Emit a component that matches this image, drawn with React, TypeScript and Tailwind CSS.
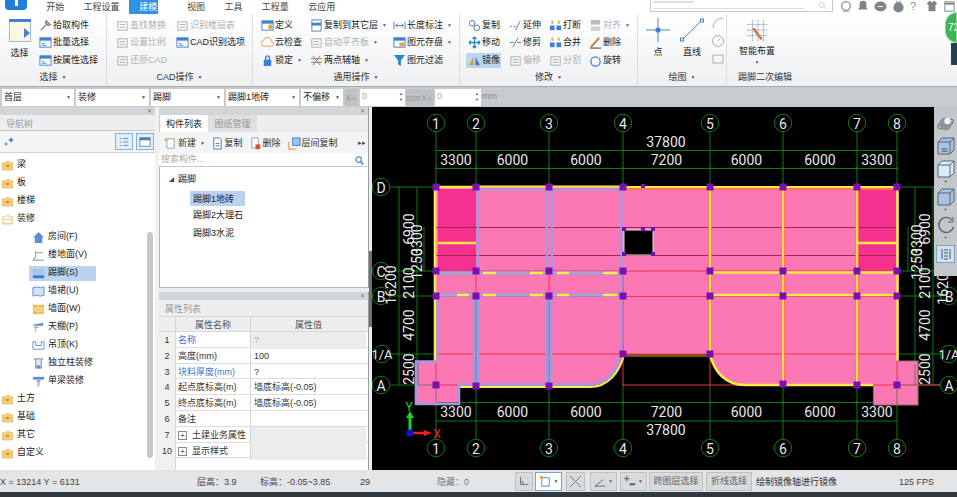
import React from "react";

const B = "#3b82d6";
const O = "#e8a33a";
const G = "#a9adb2";

function Ic({ children, s = 14 }: { children?: React.ReactNode; s?: number }) {
  return (
    <svg width={s} height={s} viewBox="0 0 14 14" className="shrink-0" fill="none">
      {children}
    </svg>
  );
}

const win = (
  <>
    <rect x="1" y="2" width="12" height="10" fill="#fff" stroke={B} />
    <rect x="1" y="2" width="12" height="3" fill={B} />
    <path d="M3 8h3M3 10h5" stroke={B} />
  </>
);
const ghost = (
  <>
    <rect x="2" y="3" width="10" height="9" stroke={G} />
    <path d="M4 6h6M4 9h6" stroke={G} />
  </>
);
const blocks = (
  <>
    <rect x="1" y="7" width="5" height="5" fill={B} />
    <rect x="8" y="7" width="5" height="5" fill={B} />
    <path d="M3.5 2v3M10.5 2v3" stroke={O} strokeWidth="2" />
  </>
);

function Item({ icon, t, dim, arrow, hl }: { icon: React.ReactNode; t: string; dim?: boolean; arrow?: boolean; hl?: boolean }) {
  return (
    <div className={`flex items-center h-[17.5px] ${dim ? "text-[#b0b2b5]" : "text-[#222]"}`}>
      <div className={`flex items-center justify-center h-[15px] w-[16px] shrink-0 ${hl ? "bg-[#bcd6f2]" : ""}`}>
        <Ic s={13}>{icon}</Ic>
      </div>
      <span className={`whitespace-nowrap leading-[15px] h-[15px] ${hl ? "bg-[#bcd6f2] pr-[1px]" : ""}`}>{t}</span>
      {arrow && <span className="text-[5px] ml-[4px] text-[#666]">▼</span>}
    </div>
  );
}

function Group({ w, label, children, last }: { w: string; label: string; children: React.ReactNode; last?: boolean }) {
  return (
    <div className={`${w} h-full flex flex-col shrink-0 ${last ? "" : "border-r border-[#dcdee0]"}`}>
      <div className="h-[54px] flex pt-[1px]">{children}</div>
      <div className="flex-1 flex items-center justify-center text-[#333] gap-[4px] pt-[1px]">
        {label.split("|").map((s, i) => (i === 0 ? <span key={i}>{s}</span> : <span key={i} className="text-[5px] text-[#555]">▼</span>))}
      </div>
    </div>
  );
}

function Col({ children, w }: { children: React.ReactNode; w: string }) {
  return <div className={`${w} shrink-0 pt-[1.5px]`}>{children}</div>;
}

function Ribbon() {
  return (
    <div className="h-[73px] flex bg-gradient-to-b from-white to-[#eff0f2] border-b border-[#a8abae]">
      <Group w="w-[107px]" label="选择|">
        <div className="w-[37px] flex flex-col items-center pt-[4px] pl-[2px] shrink-0">
          <svg width="22" height="23" viewBox="0 0 22 23">
            <rect x="0.5" y="0.5" width="21" height="22" fill="#fdf6e3" stroke="#9dbbe0" />
            <rect x="0" y="0" width="22" height="3" fill={B} />
            <path d="M15 9l6 5-6 5z" fill={B} />
          </svg>
          <span className="mt-[5px] text-[#222]">选择</span>
        </div>
        <Col w="w-[70px]">
          <Item icon={<path d="M2 12L9 5M8 2l4 4-2 1-3-3z" stroke="#777" strokeWidth="1.4" />} t="拾取构件" />
          <Item icon={win} t="批量选择" />
          <Item icon={win} t="按属性选择" />
        </Col>
      </Group>
      <Group w="w-[146px]" label="CAD操作|">
        <Col w="w-[60px] ml-[7px]">
          <Item dim icon={ghost} t="查找替换" />
          <Item dim icon={ghost} t="设置比例" />
          <Item dim icon={ghost} t="还原CAD" />
        </Col>
        <Col w="w-[72px]">
          <Item dim icon={ghost} t="识别楼层表" />
          <Item icon={win} t="CAD识别选项" />
        </Col>
      </Group>
      <Group w="w-[207px]" label="通用操作|">
        <Col w="w-[49px] ml-[6px]">
          <Item icon={<><rect x="1" y="2" width="12" height="10" fill="#fff" stroke={B} /><rect x="1" y="2" width="12" height="3" fill={B} /><rect x="8" y="6" width="4" height="5" fill={O} /></>} t="定义" />
          <Item icon={<path d="M3 11a3 3 0 0 1 0-6 4 4 0 0 1 8 1 2.5 2.5 0 0 1 0 5z" stroke={O} />} t="云检查" />
          <Item icon={<><rect x="3" y="6" width="8" height="7" rx="1" fill={B} /><path d="M5 6V4a2 2 0 0 1 4 0v2" stroke={B} strokeWidth="1.5" /></>} t="锁定" arrow />
        </Col>
        <Col w="w-[83px]">
          <Item icon={<><rect x="2" y="1" width="10" height="12" fill="#fff" stroke="#5b7fb0" /><rect x="2" y="4" width="10" height="3" fill={B} /></>} t="复制到其它层" arrow />
          <Item dim icon={ghost} t="自动平齐板" arrow />
          <Item icon={<path d="M3 2l8 10M11 2L3 12M1 5h12M1 9h12" stroke="#8a7a66" />} t="两点辅轴" arrow />
        </Col>
        <Col w="w-[66px]">
          <Item icon={<path d="M1 3v8M13 3v8M3 7h8M3 7l2-2M3 7l2 2M11 7L9 5M11 7L9 9" stroke="#4b78b5" />} t="长度标注" arrow />
          <Item icon={<><rect x="1" y="2" width="12" height="10" fill="#fff" stroke="#4b78b5" /><rect x="1" y="2" width="12" height="3" fill={B} /><rect x="7" y="7" width="5" height="4" fill={O} /></>} t="图元存盘" arrow />
          <Item icon={<path d="M1 1h12L8.5 7v6l-3-2V7z" fill="#2a86c8" />} t="图元过滤" />
        </Col>
      </Group>
      <Group w="w-[178px]" label="修改|">
        <Col w="w-[41px] ml-[6px]">
          <Item icon={<><rect x="1.5" y="1.5" width="6" height="6" rx="3" stroke="#4b78b5" /><rect x="6.5" y="6.5" width="6" height="6" rx="3" stroke="#4b78b5" /></>} t="复制" />
          <Item icon={<path d="M7 1v12M1 7h12M7 1L5 3M7 1l2 2M7 13l-2-2M7 13l2-2M1 7l2-2M1 7l2 2M13 7l-2-2M13 7l-2 2" stroke="#2a86c8" strokeWidth="1.4" />} t="移动" />
          <Item hl icon={<><path d="M6 3v9H1z" fill="#d9a12e" /><path d="M8 3v9h5z" fill="#4b78b5" /></>} t="镜像" />
        </Col>
        <Col w="w-[40px]">
          <Item icon={<path d="M1 8h2M5 8h2M7 12l5-10" stroke="#4b78b5" />} t="延伸" />
          <Item icon={<path d="M1 7h4M9 7h4M4 12l6-10" stroke="#4b78b5" />} t="修剪" />
          <Item dim icon={ghost} t="偏移" />
        </Col>
        <Col w="w-[40px]">
          <Item icon={blocks} t="打断" />
          <Item icon={blocks} t="合并" />
          <Item dim icon={ghost} t="分割" />
        </Col>
        <Col w="w-[48px]">
          <Item dim icon={<><rect x="2" y="1" width="10" height="5" fill="#b9bbbe" /><rect x="2" y="8" width="10" height="5" fill="#cfd1d3" /></>} t="对齐" arrow />
          <Item icon={<><path d="M2 12L11 2" stroke="#c77b2b" strokeWidth="2" /><path d="M1 13h12" stroke="#333" /></>} t="删除" />
          <Item icon={<circle cx="7" cy="8" r="5" stroke={B} strokeWidth="1.3" />} t="旋转" />
        </Col>
      </Group>
      <Group w="w-[89px]" label="绘图|">
        <div className="w-[39px] flex flex-col items-center pt-[3px] pl-[1px] shrink-0">
          <svg width="24" height="24" viewBox="0 0 24 24">
            <path d="M12 0v24M0 12h24" stroke="#5e86b9" />
            <circle cx="12" cy="12" r="2.6" fill={B} />
          </svg>
          <span className="mt-[4px] text-[#222]">点</span>
        </div>
        <div className="w-[30px] flex flex-col items-center pt-[3px] shrink-0">
          <svg width="24" height="24" viewBox="0 0 24 24">
            <path d="M2 22L22 2" stroke="#5e86b9" />
            <rect x="0.5" y="20" width="3" height="3" fill="#fff" stroke={B} />
            <rect x="20.5" y="1" width="3" height="3" fill="#fff" stroke={B} />
          </svg>
          <span className="mt-[4px] text-[#222]">直线</span>
        </div>
        <div className="flex flex-col items-center gap-[4px] pt-[1px] ml-[4px]">
          <Ic><path d="M2 12C3 5 6 3 12 2" stroke={G} /></Ic>
          <Ic><circle cx="7" cy="7" r="5.5" stroke={G} /><path d="M7 7l2-2" stroke={G} /></Ic>
          <Ic><rect x="2" y="3" width="10" height="8" stroke={G} /></Ic>
        </div>
      </Group>
      <Group w="w-[76px]" label="踢脚二次编辑" last>
        <div className="w-[60px] flex flex-col items-center pt-[5px]">
          <svg width="24" height="22" viewBox="0 0 24 24">
            <path d="M1 5h22M1 11h22M1 17h22M7 0v24M13 0v24M19 0v24" stroke="#7ea6d8" strokeDasharray="2 1" />
            <path d="M8 9l9 12" stroke="#d9763a" strokeWidth="3" />
          </svg>
          <span className="mt-[2px] text-[#222] leading-[14px]">智能布置</span>
          <span className="text-[5px] leading-[8px] text-[#666]">▼</span>
        </div>
      </Group>
    </div>
  );
}

function Select({ t, w }: { t: string; w: string }) {
  return (
    <div className={`${w} h-[17px] bg-white flex items-center justify-between px-[2px] pt-[1px] text-[#222] shrink-0`}>
      <span className="whitespace-nowrap">{t}</span>
      <span className="text-[5px] text-[#555] pr-[1px]">▼</span>
    </div>
  );
}

function Spin({ w }: { w: string }) {
  return (
    <div className={`${w} h-[17px] bg-white flex items-center justify-between pl-[2px] pr-[2px] text-[#aaa] shrink-0`}>
      <span>0</span>
      <span className="flex flex-col text-[4px] leading-[6px] text-[#555]"><span>▲</span><span>▼</span></span>
    </div>
  );
}

function Toolbar() {
  return (
    <div className="h-[20px] bg-[#c9ccce] flex items-center gap-[2px] pl-[2px]">
      <Select t="首层" w="w-[72px]" />
      <Select t="装修" w="w-[73px]" />
      <Select t="踢脚" w="w-[73px]" />
      <Select t="踢脚1地砖" w="w-[73px]" />
      <Select t="不偏移" w="w-[42px]" />
      <span className="w-[13px] text-[#999] bg-[#bfc2c4] h-[17px] leading-[18px] shrink-0">X=</span>
      <Spin w="w-[45px]" />
      <span className="w-[28px] text-[#999] bg-[#bfc2c4] h-[17px] leading-[18px] shrink-0 -mx-[1px]">mmY=</span>
      <Spin w="w-[46px]" />
      <span className="text-[#888] -ml-[1px]">mm</span>
    </div>
  );
}

function Folder({ open }: { open?: boolean }) {
  return (
    <svg width="11" height="11" viewBox="0 0 12 12" className="shrink-0">
      <path d="M0 3h4l1-1.5h3V3h4v8H0z" fill={open ? "#f8f3e4" : "#f2cd7b"} stroke="#e0b25a" strokeWidth="0.6" />
      {open ? <path d="M1 6h10v4H1z" fill="#fff" stroke="#d8b56a" strokeWidth="0.6" /> : <path d="M4 6.5h4" stroke="#e08a2e" strokeWidth="2" />}
    </svg>
  );
}

const childIcons: Record<string, React.ReactNode> = {
  room: <path d="M7 1L1 7h2v6h8V7h2z" fill="#5b8fd2" />,
  floor: <><path d="M4 2v7L1 12h12" stroke="#5b8fd2" /><path d="M4 4h8" stroke="#9a9a9a" /></>,
  skirt: <><rect x="1" y="2" width="12" height="7" fill="#a9c4e6" /><rect x="1" y="9" width="12" height="3" fill="#2f7bd0" /></>,
  dado: <path d="M1 3l4-1 4 1 4-1v9l-4 1-4-1-4 1z" fill="#cfe2f7" stroke="#5b8fd2" />,
  wall: <><rect x="1" y="2" width="12" height="10" fill="#f5b93e" /><path d="M1 5.5h12M1 8.5h12M7 2v4M4 5.5v3M10 5.5v3M7 8.5v4" stroke="#fff" strokeWidth="0.7" /></>,
  ceil: <><path d="M1 4l11-2v3H1z" fill="#5b8fd2" /><path d="M4 5v7M2 7h5" stroke="#88a9d4" /></>,
  susp: <path d="M1 3v8h12V3h-3v4H4V3z" fill="#fff" stroke="#5b8fd2" />,
  col: <><path d="M2.5 2h9L10 4v8H4V4z" fill="#dfe8f3" stroke="#666" strokeWidth="0.8" /><path d="M5 9h4v3H5z" fill="#5b8fd2" /></>,
  beam: <><path d="M1 2h12v3H1z" fill="#5b8fd2" /><path d="M5 5h4v3H5zM6 8h2v4H6z" fill="#9fb3c9" /></>,
};

function NavRow({ t, open }: { t: string; open?: boolean }) {
  return (
    <div className="h-[18px] flex items-center gap-[4px] pl-[2px] text-[#222]">
      <Folder open={open} />
      <span>{t}</span>
    </div>
  );
}

function NavChild({ t, ic, sel }: { t: string; ic: string; sel?: boolean }) {
  return (
    <div className="h-[18px] flex items-center pl-[29px]">
      <div className={`flex items-center gap-[3px] h-[15px] pl-[3px] w-[67px] whitespace-nowrap text-[#222] ${sel ? "bg-[#bcd3ef]" : ""}`}>
        <Ic s={13}>{childIcons[ic]}</Ic>
        <span>{t}</span>
      </div>
    </div>
  );
}

function CloseStrip() {
  return (
    <div className="h-[8px] bg-[#d3d6d8] flex items-center justify-end pr-[3px] text-[6px] leading-none text-[#777]">✕</div>
  );
}

function NavPanel() {
  return (
    <div className="w-[155px] shrink-0 bg-white flex flex-col relative">
      <CloseStrip />
      <div className="h-[16px] bg-[#eeeeee] text-[#999] pl-[6px] leading-[18px] border-b border-[#c6c8ca]">导航树</div>
      <div className="h-[22px] bg-[#f4f5f6] border-b border-[#d0d2d4] flex items-center pl-[4px] pr-[1px]">
        <svg width="11" height="11" viewBox="0 0 11 11"><path d="M7 1l1 2 2 1-2 1-1 2-1-2-2-1 2-1zM2 6l.8 1.5L4 8l-1.2.6L2 10l-.8-1.4L0 8l1.2-.5z" fill={B} /></svg>
        <div className="ml-auto flex gap-[3px]">
          <div className="w-[18px] h-[17px] border border-[#7fb2e5] bg-[#e3effb] flex items-center justify-center">
            <Ic s={12}><path d="M2 3h2M6 3h6M2 7h2M6 7h6M2 11h2M6 11h6" stroke="#5f7f9f" /></Ic>
          </div>
          <div className="w-[18px] h-[17px] border border-[#7fb2e5] bg-[#e3effb] flex items-center justify-center">
            <Ic s={12}><rect x="1" y="2" width="12" height="10" stroke="#5f7f9f" fill="#fff" /><rect x="1" y="2" width="12" height="3" fill="#5f7f9f" /></Ic>
          </div>
        </div>
      </div>
      <div className="pt-[3px]">
        <NavRow t="梁" /><NavRow t="板" /><NavRow t="楼梯" /><NavRow t="装修" open />
        <NavChild t="房间(F)" ic="room" />
        <NavChild t="楼地面(V)" ic="floor" />
        <NavChild t="踢脚(S)" ic="skirt" sel />
        <NavChild t="墙裙(U)" ic="dado" />
        <NavChild t="墙面(W)" ic="wall" />
        <NavChild t="天棚(P)" ic="ceil" />
        <NavChild t="吊顶(K)" ic="susp" />
        <NavChild t="独立柱装修" ic="col" />
        <NavChild t="单梁装修" ic="beam" />
        <NavRow t="土方" /><NavRow t="基础" /><NavRow t="其它" /><NavRow t="自定义" />
      </div>
      <div className="absolute left-[147px] top-[125px] w-[6px] h-[226px] rounded-[3px] bg-[#c8c8c8]" />
    </div>
  );
}

function ToolBtn({ w, icon, t }: { w: string; icon: React.ReactNode; t: string }) {
  return (
    <div className={`${w} shrink-0 flex items-center pl-[2px] gap-[0.5px] text-[#333] whitespace-nowrap`}>
      <Ic s={13}>{icon}</Ic>
      <span>{t}</span>
    </div>
  );
}

function ListPanel() {
  return (
    <div className="h-[181px] flex flex-col bg-white border-r border-[#9a9c9e]">
      <CloseStrip />
      <div className="h-[17px] bg-[#eeeeee] flex shrink-0">
        <div className="w-[49px] bg-white text-center leading-[19px] text-[#222] border-l border-[#ccc]">构件列表</div>
        <div className="w-[49px] bg-[#dedfe0] text-center leading-[19px] text-[#999]">图纸管理</div>
      </div>
      <div className="h-[21px] shrink-0 bg-[#f3f4f5] flex items-center pl-[3px] pt-[2px] relative">
        <div className="w-[47px] shrink-0 flex items-center pl-[2px] gap-[1px] text-[#333]">
          <Ic s={13}><path d="M3 2h8v10H3z" fill="#fff" stroke="#999" /><path d="M2 1v4M0 3h4" stroke={O} /></Ic>
          <span>新建</span><span className="text-[5px] text-[#555] ml-[3px]">▼</span>
        </div>
        <ToolBtn w="w-[38px]" t="复制" icon={<><path d="M3 1h6l2 2v10H3z" fill="#fff" stroke="#4b78b5" /><path d="M5 7h4M5 9.5h4" stroke="#4b78b5" /></>} />
        <ToolBtn w="w-[39px]" t="删除" icon={<><path d="M3 1h7v11H3z" fill="#fff" stroke="#999" /><rect x="7" y="8" width="5" height="5" fill="#d9463a" /></>} />
        <ToolBtn w="w-[50px]" t="层间复制" icon={<><rect x="5" y="1" width="8" height="8" fill="#9cc4ef" stroke={B} /><path d="M1 5v8h8" stroke={O} strokeWidth="1.3" /></>} />
        <span className="absolute right-[2px] text-[7px] text-[#444]">▸▸</span>
      </div>
      <div className="h-[14px] shrink-0 flex items-center justify-between pl-[2px] pr-[3px] pt-[1px] text-[#aaa] border-b border-[#c8cacc] bg-white">
        <span>搜索构件...</span>
        <Ic s={11}><circle cx="6" cy="6" r="3.5" stroke="#4f8fcf" strokeWidth="1.6" /><path d="M9 9l3 3" stroke="#4f8fcf" strokeWidth="2" /></Ic>
      </div>
      <div className="flex-1 pt-[4px] border-l border-b border-[#b5b7b9] text-[#222]">
        <div className="h-[18px] flex items-center pl-[9px] gap-[4px]"><span className="text-[5px] text-[#444]">◢</span>踢脚</div>
        <div className="h-[18px] flex items-center pl-[30px]"><div className="w-[55px] h-[15px] leading-[16px] bg-[#b9d2f0] pl-[3px] whitespace-nowrap">踢脚1地砖</div></div>
        <div className="h-[18px] flex items-center pl-[33px] whitespace-nowrap">踢脚2大理石</div>
        <div className="h-[18px] flex items-center pl-[33px] whitespace-nowrap">踢脚3水泥</div>
      </div>
    </div>
  );
}

const rows: [string, string, string, boolean?, boolean?][] = [
  ["1", "名称", "?", true],
  ["2", "高度(mm)", "100"],
  ["3", "块料厚度(mm)", "?", true],
  ["4", "起点底标高(m)", "墙底标高(-0.05)"],
  ["5", "终点底标高(m)", "墙底标高(-0.05)"],
  ["6", "备注", ""],
  ["7", "土建业务属性", "", false, true],
  ["10", "显示样式", "", false, true],
];

function AttrPanel() {
  return (
    <div className="flex-1 flex flex-col bg-white mt-[4px] border-r border-[#9a9c9e]">
      <CloseStrip />
      <div className="h-[16px] bg-[#eeeeee] text-[#999] pl-[6px] leading-[18px]">属性列表</div>
      <div className="grid grid-cols-[17px_75px_115px] h-[16px] bg-[#eeeeee] text-[#555] text-center leading-[17px] border-y border-[#d5d6d8]">
        <div className="border-r border-[#d5d6d8]" />
        <div className="border-r border-[#d5d6d8]">属性名称</div>
        <div>属性值</div>
      </div>
      {rows.map((r, i) => (
        <div key={r[0]} className="grid grid-cols-[17px_75px_115px] h-[15.8px] leading-[17px] border-b border-[#dcdddf] text-[#333]">
          <div className="bg-[#f0f0f0] text-center border-r border-[#d5d6d8]">{r[0]}</div>
          <div className={`pl-[2px] whitespace-nowrap border-r border-[#d5d6d8] flex items-center gap-[5px] ${r[3] ? "text-[#3f6fd8]" : ""}`}>
            {r[4] && <span className="w-[9px] h-[9px] border border-[#888] text-[8px] leading-[7px] text-center shrink-0 box-border">+</span>}
            {r[1]}
          </div>
          <div className={`pl-[3px] whitespace-nowrap ${i === 0 ? "bg-[#ececec] text-[#aaa]" : r[4] ? "bg-[#ececec]" : ""}`}>{r[2]}</div>
        </div>
      ))}
      <div className="flex-1 flex"><div className="w-[17px] bg-[#f0f0f0] border-r border-[#d5d6d8]" /></div>
    </div>
  );
}

const X = [436, 476, 549, 623, 710, 783, 857, 897];
const XL = ["1", "2", "3", "4", "5", "6", "7", "8"];
const Y: [number, string][] = [[187, "D"], [271, "C"], [296, "B"], [354, "1/A"], [385, "A"]];
const span = ["3300", "6000", "6000", "7200", "6000", "6000", "3300"];
const GRN = "#0e7a18";
const TXT = "#e6e6e6";
const RED = "#f0304f";
const PUR = "#9b9ce4";
const YEL = "#ffe94a";

function VText({ x, y, t, fill = TXT }: { x: number; y: number; t: string; fill?: string }) {
  return (
    <text x={x} y={y} transform={`rotate(-90 ${x} ${y})`} fontSize="14" textAnchor="middle" dominantBaseline="central" fill={fill} fontFamily="Roboto, sans-serif">
      {t}
    </text>
  );
}

function Bubble({ x, y, t }: { x: number; y: number; t: string }) {
  return (
    <g>
      <circle cx={x} cy={y} r="8.7" fill="#000" stroke={GRN} />
      <text x={x} y={y + 0.5} fontSize={t.length > 1 ? 13 : 14} textAnchor="middle" dominantBaseline="central" fill={TXT} fontFamily="Roboto, sans-serif">{t}</text>
    </g>
  );
}

function Tick({ x, y }: { x: number; y: number }) {
  return <circle cx={x} cy={y} r="1.2" fill={GRN} />;
}

function Cad() {
  const nodes: [number, number][] = [
    ...X.map((x) => [x, 187] as [number, number]),
    ...X.map((x) => [x, 271] as [number, number]),
    ...X.map((x) => [x, 296] as [number, number]),
    [623, 354], [710, 354],
    [436, 385], [476, 386], [549, 386], [783, 384], [857, 385], [897, 385],
  ];
  const outline = "M436,187 H897 V361 H918 V405 H873 V386 H745 C726,386 714,372 710,354 H623 C619,372 607,386 590,386 H460 V405 H415 V361 H436 Z";
  return (
    <svg width="585" height="363" viewBox="372 107 585 363" className="block">
      <rect x="372" y="107" width="585" height="363" fill="#000" />
      {X.map((x) => (
        <g key={x}>
          <line x1={x} y1={132} x2={x} y2={187} stroke={GRN} />
          <line x1={x} y1={386} x2={x} y2={439} stroke={GRN} />
          <Tick x={x} y={168.5} />
          <Tick x={x} y={402.5} />
        </g>
      ))}
      {[150.5, 168.5, 402.5, 421].map((y) => (
        <line key={y} x1={436} x2={897} y1={y} y2={y} stroke={GRN} />
      ))}
      {Y.map(([y]) => (
        <g key={y}>
          <line x1={390} x2={436} y1={y} y2={y} stroke={GRN} />
          <line x1={897} x2={940} y1={y} y2={y} stroke={GRN} />
        </g>
      ))}
      {[399, 417, 915, 933].map((x) => (
        <line key={x} x1={x} x2={x} y1={187} y2={385} stroke={GRN} />
      ))}
      <path d="M424 227v44M908 227v44" stroke={GRN} />
      <path d={outline} fill="#fb78b4" />
      <rect x="438" y="189" width="38" height="82" fill="#f5308f" />
      <rect x="858" y="189" width="38" height="82" fill="#f5308f" />
      <rect x="623" y="354" width="87" height="3" fill="#6a5a10" />
      <path d="M436 227.5H897M436 255.5H897" stroke="#a3254f" />
      <path d="M436 271H897M436 296.5H897M436 354H897M623 385H957M436 385H460" stroke={RED} />
      <path d="M476 271V386M549 271V386M623 271V386M710 271V386M783 271V386M857 271V386M897 271V386M436 361V385" stroke={RED} />
      <path d="M623 188H897M710 187V354M783 187V386M857 187V386" stroke="#ff7a3c" strokeWidth="3.5" fill="none" />
      <path d="M623 187H897M710 187V354M783 187V386M857 187V386" stroke={YEL} strokeWidth="1.8" fill="none" />
      <path d="M897.5 187V361" stroke={YEL} strokeWidth="2.6" />
      <path d="M712 272.5H897M712 295H897" stroke={YEL} strokeWidth="2.6" />
      <path d="M857 243H897" stroke={YEL} strokeWidth="2.6" />
      <path d="M710 354C714,372 726,385 745,385H873" stroke={YEL} strokeWidth="2.6" fill="none" />
      <path d="M435 187V361M436 187H476" stroke={YEL} strokeWidth="2.6" />
      <path d="M438 243H476" stroke={YEL} strokeWidth="2.6" />
      <path d="M476 186.5H623" stroke={YEL} strokeWidth="2" />
      <path d="M460 387H590C608,387 620,372 624,354" stroke={YEL} strokeWidth="2.2" fill="none" />
      <path d="M477 189.5H621M478 189V271M547 189V271M552 189V271M621.5 189V352M437.5 296V359" stroke={PUR} strokeWidth="2.2" fill="none" />
      <path d="M436 273H623M436 295H623" stroke={PUR} strokeWidth="3.6" fill="none" />
      <path d="M436 273H623M436 295H623" stroke="#b0b0b0" strokeWidth="1.2" fill="none" />
      <path d="M476 296V385M549 296V385" stroke={PUR} strokeWidth="6.5" fill="none" />
      <path d="M476 296V385M549 296V385" stroke="#7f7a9a" strokeWidth="1" fill="none" />
      <path d="M438 361.5H416V404H459V384.5H590C606,384.5 617,371 621,354" stroke={PUR} strokeWidth="2.6" fill="none" />
      <path d="M483 273h13M530 273h13M557 273h12M603 273h14M457 295h12M483 295h13M530 295h13M557 295h12M603 295h14" stroke={YEL} strokeWidth="2.4" />
      <path d="M418 362v23h18M436 385v18M438 402.5h21" stroke="#777" fill="none" />
      <path d="M873.5 386V405H918V361H897M897 385H917M897 385v20M915 364v21" stroke="#8f7466" strokeWidth="1.2" fill="none" />
      <rect x="624" y="230" width="29" height="25" fill="#000" stroke="#f6d3e4" />
      {nodes.map(([x, y], i) => (
        <rect key={i} x={x - 3.5} y={y - 3.5} width="7" height="7" fill="#7a10b4" />
      ))}
      {[[624, 229], [643, 229], [653, 229], [624, 254], [653, 254], [643, 186]].map(([x, y], i) => (
        <rect key={i} x={x - 2} y={y - 2} width="4" height="4" fill="#6a12c0" />
      ))}
      {XL.map((t, i) => (
        <g key={t}>
          <Bubble x={X[i]} y={123} t={t} />
          <Bubble x={X[i]} y={448} t={t} />
        </g>
      ))}
      {Y.map(([y, t]) => (
        <Bubble key={t} x={t === "1/A" ? 382 : 381} y={y} t={t} />
      ))}
      {Y.slice(2).map(([y, t]) => (
        <Bubble key={t} x={949} y={y} t={t} />
      ))}
      {span.map((t, i) => (
        <g key={i} fontSize="14" textAnchor="middle" fill={TXT} fontFamily="Roboto, sans-serif">
          <text x={(X[i] + X[i + 1]) / 2} y={165}>{t}</text>
          <text x={(X[i] + X[i + 1]) / 2} y={417}>{t}</text>
        </g>
      ))}
      <g fontSize="14" textAnchor="middle" fill={TXT} fontFamily="Roboto, sans-serif">
        <text x="666" y="146.5">37800</text>
        <text x="666" y="435">37800</text>
      </g>
      <VText x={409} y={229} t="6900" />
      <VText x={417} y={240} t="3300" />
      <VText x={417} y={264} t="1250" />
      <VText x={409} y={283} t="2100" />
      <VText x={391} y={285} t="16200" />
      <VText x={409} y={325} t="4700" />
      <VText x={409} y={369} t="2500" />
      <VText x={925} y={229} t="6900" />
      <VText x={917} y={240} t="3300" />
      <VText x={917} y={264} t="1250" />
      <VText x={925} y={283} t="2100" />
      <VText x={943} y={285} t="16200" />
      <VText x={925} y={325} t="4700" />
      <VText x={925} y={369} t="2500" />
      <path d="M410 433V416" stroke="#17d62a" strokeWidth="3" />
      <path d="M410 411l-4 7h8z" fill="#17d62a" />
      <path d="M410 433H426" stroke="#f02020" strokeWidth="2.5" />
      <path d="M432 433l-8-3v6z" fill="#f02020" />
      <circle cx="410" cy="433" r="3.6" fill="#1010d8" />
      <text x="409" y="411" fontSize="12" textAnchor="middle" fill="#17d62a" fontFamily="Roboto, sans-serif">Y</text>
      <text x="437" y="438" fontSize="12" textAnchor="middle" fill="#f02020" fontFamily="Roboto, sans-serif">X</text>
    </svg>
  );
}

function Tri() {
  return <span className="text-[4px] leading-[4px] text-[#555] h-[4px] mt-[2px]">▼</span>;
}

function ViewTools() {
  return (
    <div className="absolute right-0 top-0 w-[23px] h-[169px] bg-[#c3c7ca] flex flex-col items-center pt-[9px]">
      <svg width="19" height="16" viewBox="0 0 18 16"><ellipse cx="9" cy="8" rx="8.5" ry="3.5" fill="none" stroke="#667" transform="rotate(-25 9 8)" /><circle cx="9" cy="8" r="6.5" fill="#8e949b" /><circle cx="11" cy="5" r="3.2" fill="#f2f2f2" /></svg>
      <svg width="18" height="18" viewBox="0 0 18 18" className="mt-[5px]"><path d="M1 5l4-4h12v12l-4 4H1z" fill="#a9c3de" stroke="#55677a" /><path d="M1 5h12v12M13 5l4-4" stroke="#55677a" fill="none" /><text x="4" y="15" fontSize="5.5" fill="#345" fontFamily="Roboto, sans-serif">3D</text></svg>
      <svg width="18" height="18" viewBox="0 0 18 18" className="mt-[5px]"><path d="M1 5l4-4h12v12l-4 4H1z" fill="#d7ecf7" stroke="#55677a" /><path d="M1 5h12v12M13 5l4-4" stroke="#55677a" fill="none" /></svg>
      <Tri />
      <svg width="18" height="18" viewBox="0 0 18 18" className="mt-[4px]"><path d="M1 5l4-4h12v12l-4 4H1z" fill="#a9c3de" stroke="#55677a" /><path d="M1 5h12v12M13 5l4-4" stroke="#55677a" fill="none" /></svg>
      <Tri />
      <svg width="18" height="18" viewBox="0 0 18 18" className="mt-[4px]"><path d="M15 4A7.5 7.5 0 1 0 16.5 11" fill="none" stroke="#56626e" strokeWidth="1.4" /><path d="M16 1v5h-5" fill="none" stroke="#56626e" /></svg>
      <Tri />
      <div className="w-[19px] h-[18px] mt-[5px] border border-[#8aa0b8] bg-[#cfe0ef] flex items-center justify-center">
        <Ic s={14}><path d="M3 2v10M11 2v10M5 3h4M5 6h4M5 9h4M5 12h4" stroke="#40586f" /></Ic>
      </div>
    </div>
  );
}

function StatusBtn({ children, w, active }: { children: React.ReactNode; w: string; active?: boolean }) {
  return (
    <div className={`${w} h-[19px] flex items-center justify-center shrink-0 border ${active ? "border-[#6aa5e5] bg-white" : "border-[#bdbfc1] bg-[#d9dadc]"}`}>
      {children}
    </div>
  );
}

function Status() {
  return (
    <div className="h-[22px] bg-[#e4e5e6] flex items-center text-[#444] whitespace-nowrap leading-[14px]">
      <span className="w-[197px] shrink-0 pt-[1px]">X = 13214 Y = 6131</span>
      <span className="w-[63px] shrink-0 pt-[1px]">层高：3.9</span>
      <span className="w-[100px] shrink-0 pt-[1px]">标高：-0.05~3.85</span>
      <span className="w-[77px] shrink-0 pt-[1px]">29</span>
      <span className="w-[78px] shrink-0 pt-[1px] text-[#777]">隐藏：0</span>
      <div className="flex items-center gap-[2px] text-[#666]">
        <StatusBtn w="w-[18px]"><Ic s={12}><path d="M3 2v9h9M3 8h3v3" stroke="#666" /></Ic></StatusBtn>
        <StatusBtn w="w-[27px]" active><Ic s={13}><rect x="3" y="3" width="8" height="9" stroke="#4b8ad0" fill="#fff" /><rect x="1" y="1" width="3" height="3" fill={O} /></Ic><span className="text-[5px] ml-[2px] text-[#555]">▼</span></StatusBtn>
        <StatusBtn w="w-[19px] ml-[2px]"><Ic s={13}><path d="M1 1l12 12M13 1L1 13" stroke="#777" /></Ic></StatusBtn>
        <StatusBtn w="w-[27px] ml-[3px]"><Ic s={13}><path d="M1 12h11M1 12l9-7" stroke="#666" /></Ic><span className="text-[5px] ml-[1px]">▼</span></StatusBtn>
        <StatusBtn w="w-[27px] ml-[1px]"><Ic s={13}><path d="M3 1v6M0 4h6" stroke="#555" /><rect x="6" y="9" width="6" height="2" fill="#555" /></Ic><span className="text-[5px] ml-[1px]">▼</span></StatusBtn>
        <StatusBtn w="w-[54px]">跨图层选择</StatusBtn>
        <StatusBtn w="w-[46px] ml-[1px]">折线选择</StatusBtn>
      </div>
      <span className="ml-[4px] w-[143px] shrink-0 pt-[1px] text-[#333]">绘制镜像轴进行镜像</span>
      <span className="pt-[1px]">125 FPS</span>
    </div>
  );
}

const tabs = ["开始", "工程设置", "建模", "视图", "工具", "工程量", "云应用"];

function Top() {
  return (
    <div className="h-[14px] bg-white flex items-start relative">
      <div className="w-[22px] h-[10px] ml-[5px] rounded-b-[4px] bg-[#1f7fd6] flex justify-center shrink-0">
        <div className="w-[3px] h-[6px] bg-white" />
      </div>
      <div className="flex ml-[9.5px] text-[#444] h-[14px] leading-[15px]">
        {tabs.map((t) =>
          t === "建模" ? (
            <div key={t} className="pl-[10px] mr-[19.5px] pr-[0.5px] whitespace-nowrap bg-[#2f92e4] text-white">{t}</div>
          ) : (
            <div key={t} className="px-[9.7px] whitespace-nowrap">{t}</div>
          )
        )}
      </div>
      <div className="absolute left-[650px] top-0 w-[183px] h-[12px] border-x border-b border-[#c9c9c9] flex items-center justify-end pr-[5px]">
        <div className="absolute left-[3px] top-[1px] w-[40px] h-[2px] bg-[#dcdcdc]" />
        <div className="absolute left-[3px] top-[8px] w-[150px] h-[1px] bg-[#dcdcdc]" />
        <Ic s={9}><circle cx="6" cy="6" r="4" stroke="#bbb" /><path d="M9 9l3 3" stroke="#bbb" /></Ic>
      </div>
      <div className="absolute left-[840px] -top-[1px] flex items-center gap-[5px]">
        <Ic s={12}><circle cx="7" cy="7" r="5" stroke="#aaa" strokeWidth="2" /><path d="M3 14h8" stroke="#aaa" strokeWidth="2" /></Ic>
        <Ic s={12}><path d="M7 1a4 4 0 0 1 4 4v4l2 2H1l2-2V5a4 4 0 0 1 4-4z" fill="#7f8488" /></Ic>
        <Ic s={13}><ellipse cx="7" cy="7" rx="6.5" ry="5.5" fill="#7f8488" /><path d="M4 7h6" stroke="#fff" /></Ic>
        <Ic s={13}><circle cx="7" cy="8" r="5.5" fill="#7f8488" /><path d="M4 1l3 2 3-2" stroke="#7f8488" /></Ic>
        <span className="text-[11px] text-[#8b8f93] w-[11px] leading-[14px]">?</span>
        <Ic s={12}><path d="M4 1l3 2 3-2 3 3-2 2v7H3V6L1 4z" fill="#7f8488" /></Ic>
        <Ic s={13}><rect x="2" y="2" width="10" height="10" stroke="#7f8488" /><path d="M2 4h10" stroke="#7f8488" strokeWidth="2" /></Ic>
      </div>
    </div>
  );
}

export default function App() {
  return (
    <div className="w-[957px] h-[497px] overflow-hidden bg-[#ececec] flex flex-col relative text-[9px] font-['Liberation_Sans','Noto_Sans_CJK_SC',sans-serif]">
      <Top />
      <Ribbon />
      <Toolbar />
      <div className="h-[363px] flex relative">
        <NavPanel />
        <div className="w-[4px] bg-[#f1f1f1] shrink-0" />
        <div className="w-[210px] shrink-0 flex flex-col">
          <ListPanel />
          <AttrPanel />
        </div>
        <div className="w-[3px] bg-[#eeeeee] shrink-0" />
        <div className="flex-1 relative overflow-hidden">
          <Cad />
          <ViewTools />
        </div>
        <div className="absolute left-[369px] top-[144px] w-[3px] h-[76px] bg-[#6f7275]" />
      </div>
      <Status />
      <div className="flex-1 bg-[#33383c]" />
      <div className="absolute right-0 top-[12px] w-[12px] h-[31px] rounded-l-[16px] bg-[#3fb25a] border border-[#8fdc9d] text-white text-[10px] leading-[29px] pl-[2px] overflow-hidden">72</div>
      <div className="absolute right-0 top-[43px] w-[6px] h-[22px] bg-[#254050]" />
    </div>
  );
}
